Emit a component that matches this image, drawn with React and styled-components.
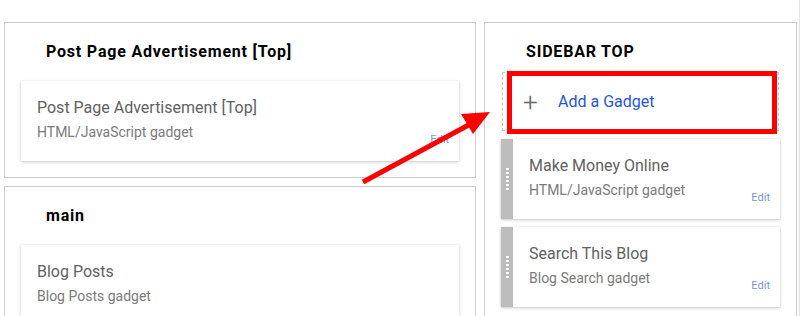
import React from 'react';
import styled, { createGlobalStyle } from 'styled-components';

const GlobalStyle = createGlobalStyle`
  html, body {
    margin: 0;
    height: 316px;
    overflow: hidden;
    background: #fff;
    font-family: Roboto, "Liberation Sans", Arial, sans-serif;
  }
`;

const leftSections = [
  {
    title: 'Post Page Advertisement [Top]',
    gadgets: [{ name: 'Post Page Advertisement [Top]', type: 'HTML/JavaScript gadget', edit: true }],
  },
  {
    title: 'main',
    gadgets: [{ name: 'Blog Posts', type: 'Blog Posts gadget', edit: false }],
  },
];

const sidebarGadgets = [
  { name: 'Make Money Online', type: 'HTML/JavaScript gadget' },
  { name: 'Search This Blog', type: 'Blog Search gadget' },
];

function Gadget({ gadget, draggable }) {
  return (
    <Card>
      {draggable && (
        <Handle>
          {[0, 1, 2, 3, 4, 5].map((i) => (
            <Dot key={i} />
          ))}
        </Handle>
      )}
      <CardBody>
        <CardTitle>{gadget.name}</CardTitle>
        <CardType>{gadget.type}</CardType>
      </CardBody>
      {gadget.edit !== false && <Edit>Edit</Edit>}
    </Card>
  );
}

function App() {
  return (
    <Page>
      <GlobalStyle />
      <LeftColumn>
        {leftSections.map((section) => (
          <Section key={section.title}>
            <SectionTitle>{section.title}</SectionTitle>
            {section.gadgets.map((g) => (
              <Gadget key={g.name} gadget={g} />
            ))}
          </Section>
        ))}
      </LeftColumn>

      <RightColumn>
        <Section $tall>
          <SectionTitle $tight>SIDEBAR TOP</SectionTitle>
          <AddGadget>
            <Plus>+</Plus>
            <AddLabel>Add a Gadget</AddLabel>
            <Highlight />
          </AddGadget>
          <GadgetList>
            {sidebarGadgets.map((g) => (
              <Gadget key={g.name} gadget={g} draggable />
            ))}
          </GadgetList>
        </Section>
      </RightColumn>

      <Arrow width="809" height="316" viewBox="0 0 809 316">
        <line x1="363" y1="182" x2="476" y2="121" stroke="#ff0000" strokeWidth="5" />
        <polygon points="461,114 490,112 473,134" fill="#ff0000" />
      </Arrow>
    </Page>
  );
}

export default App;

const Page = styled.div`
  position: relative;
  display: flex;
  align-items: flex-start;
  gap: 8px;
  width: 800px;
  height: 316px;
  overflow: hidden;
  box-sizing: border-box;
  padding: 22px 2px 0 4px;
  border-right: 1px solid #e2e2e2;
`;

const LeftColumn = styled.div`
  display: flex;
  flex-direction: column;
  gap: 8px;
  width: 472px;
`;

const RightColumn = styled.div`
  width: 313px;
`;

const Section = styled.div`
  box-sizing: border-box;
  border: 1px solid #cccccc;
  padding: 19px 16px 16px;
  min-height: ${(p) => (p.$tall ? '400px' : 'auto')};
`;

const SectionTitle = styled.div`
  font-size: 16px;
  line-height: 20px;
  font-weight: 700;
  letter-spacing: 0.8px;
  color: #000;
  padding-left: 25px;
  margin-bottom: ${(p) => (p.$tight ? '10px' : '19px')};
`;

const Card = styled.div`
  display: flex;
  height: 80px;
  box-sizing: border-box;
  background: #fff;
  box-shadow: 0 1px 3px rgba(0, 0, 0, 0.22), 0 0 1px rgba(0, 0, 0, 0.08);
`;

const Handle = styled.div`
  width: 12px;
  flex-shrink: 0;
  background: #bdbdbd;
  display: flex;
  flex-direction: column;
  align-items: center;
  justify-content: center;
  gap: 2px;
`;

const Dot = styled.span`
  width: 3px;
  height: 2px;
  background: #fff;
`;

const CardBody = styled.div`
  flex: 1;
  padding: 17px 0 0 16px;
  min-width: 0;
`;

const CardTitle = styled.div`
  font-size: 16px;
  line-height: 20px;
  color: #616161;
`;

const CardType = styled.div`
  font-size: 14px;
  line-height: 18px;
  margin-top: 5px;
  color: #7a7a7a;
`;

const Edit = styled.div`
  align-self: flex-end;
  font-size: 11px;
  line-height: 14px;
  margin: 0 10px 14px 0;
  color: #7797dc;
`;

const AddGadget = styled.div`
  position: relative;
  display: flex;
  align-items: center;
  height: 59px;
  box-sizing: border-box;
  margin: 0 1px 8px;
  padding-left: 20px;
  border: 1px dashed #c8c8c8;
`;

const Plus = styled.span`
  font-size: 26px;
  font-weight: 300;
  line-height: 26px;
  color: #666;
  width: 35px;
`;

const AddLabel = styled.span`
  font-size: 16px;
  color: #2457d6;
`;

const Highlight = styled.div`
  position: absolute;
  top: -2px;
  left: 4px;
  right: 1px;
  bottom: -4px;
  border: 5px solid #ff0000;
`;

const GadgetList = styled.div`
  display: flex;
  flex-direction: column;
  gap: 8px;
`;

const Arrow = styled.svg`
  position: absolute;
  top: 0;
  left: 0;
  pointer-events: none;
`;
